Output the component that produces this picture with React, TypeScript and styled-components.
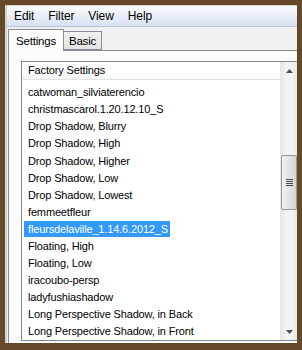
import React from "react";
import styled, { createGlobalStyle } from "styled-components";

const Global = createGlobalStyle`
  html, body { margin: 0; padding: 0; background: #5e462b; }
  body { width: 302px; height: 350px; overflow: hidden; }
`;

const Frame = styled.div`
  box-sizing: border-box;
  width: 302px;
  height: 350px;
  background: #65492b;
  padding: 5px 5px 7px 5px;
  display: flex;
`;

const Window = styled.div`
  flex: 1;
  display: flex;
  flex-direction: column;
  background: #f0f0f0;
  border-left: 2px solid #d9d2c6;
  border-top: 1px solid #d9d2c6;
  overflow: hidden;
  font-family: "Liberation Sans", Arial, sans-serif;
  color: #000;
`;

const MenuBar = styled.div`
  height: 20px;
  display: flex;
  align-items: center;
  padding-left: 7px;
  gap: 14px;
  background: linear-gradient(#fbfcfe, #e6ecf7 55%, #d9e2f3);
  border-bottom: 1px solid #b9c3d3;
  font-size: 12px;
  letter-spacing: -0.1px;
`;

const MenuItem = styled.span``;

const TabStrip = styled.div`
  height: 23px;
  display: flex;
  align-items: flex-end;
  padding-left: 1px;
`;

const Tab = styled.div<{ $active?: boolean }>`
  box-sizing: border-box;
  height: ${(p) => (p.$active ? 22 : 19)}px;
  padding: 0 ${(p) => (p.$active ? 7 : 5)}px;
  margin-bottom: ${(p) => (p.$active ? -1 : 0)}px;
  display: flex;
  align-items: center;
  font-size: 11.5px;
  letter-spacing: -0.2px;
  background: ${(p) => (p.$active ? "#fcfcfc" : "linear-gradient(#f2f2f2, #e3e3e3)")};
  border: 1px solid #898c95;
  border-bottom: ${(p) => (p.$active ? "none" : "1px solid #898c95")};
  ${(p) => (p.$active ? "" : "border-left: none;")}
  position: relative;
  z-index: ${(p) => (p.$active ? 1 : 0)};
`;

const Panel = styled.div`
  flex: 1;
  display: flex;
  background: #fcfcfc;
  border-top: 1px solid #898c95;
  border-left: 1px solid #898c95;
  margin-left: 1px;
  padding: 10px 0 2px 12px;
  min-height: 0;
`;

const ListBox = styled.div`
  flex: 1;
  display: flex;
  border: 1px solid #828790;
  border-right: none;
  background: #fff;
  min-height: 0;
`;

const ListColumn = styled.div`
  flex: 1;
  display: flex;
  flex-direction: column;
  min-width: 0;
`;

const Header = styled.div`
  height: 22px;
  display: flex;
  align-items: center;
  padding-left: 6px;
  font-size: 11px;
  letter-spacing: -0.15px;
  background: linear-gradient(#ffffff, #ffffff 50%, #f4f5f7);
  border-bottom: 1px solid #e2e3e5;
`;

const Rows = styled.div`
  padding-top: 4px;
  display: flex;
  flex-direction: column;
`;

const Row = styled.div`
  height: 17.1px;
  display: flex;
  align-items: center;
  font-size: 11px;
  letter-spacing: -0.15px;
  white-space: nowrap;
`;

const RowText = styled.span<{ $selected?: boolean }>`
  padding: 0 2px 0 4px;
  margin-left: 2px;
  line-height: 16px;
  background: ${(p) => (p.$selected ? "#3399ff" : "transparent")};
  color: ${(p) => (p.$selected ? "#fff" : "#000")};
`;

const ScrollBar = styled.div`
  width: 16px;
  display: flex;
  flex-direction: column;
  background: linear-gradient(90deg, #e6e6e6, #f3f3f3 30%, #f3f3f3 70%, #e8e8e8);
  border-left: 1px solid #e8e8e8;
`;

const Arrow = styled.div`
  height: 17px;
  display: flex;
  align-items: center;
  justify-content: center;
`;

const Track = styled.div`
  flex: 1;
  display: flex;
  flex-direction: column;
  padding-top: 76px;
`;

const Thumb = styled.div`
  box-sizing: border-box;
  height: 55px;
  border: 1px solid #979797;
  border-radius: 2px;
  background: linear-gradient(90deg, #f2f2f2, #e4e4e4 50%, #d4d4d4);
  display: flex;
  align-items: center;
  justify-content: center;
`;

const items = [
  "catwoman_silviaterencio",
  "christmascarol.1.20.12.10_S",
  "Drop Shadow, Blurry",
  "Drop Shadow, High",
  "Drop Shadow, Higher",
  "Drop Shadow, Low",
  "Drop Shadow, Lowest",
  "femmeetfleur",
  "fleursdelaville_1.14.6.2012_S",
  "Floating, High",
  "Floating, Low",
  "iracoubo-persp",
  "ladyfushiashadow",
  "Long Perspective Shadow, in Back",
  "Long Perspective Shadow, in Front",
];

export default function App() {
  return (
    <>
      <Global />
      <Frame>
        <Window>
          <MenuBar>
            <MenuItem>Edit</MenuItem>
            <MenuItem>Filter</MenuItem>
            <MenuItem>View</MenuItem>
            <MenuItem>Help</MenuItem>
          </MenuBar>
          <TabStrip>
            <Tab $active>Settings</Tab>
            <Tab>Basic</Tab>
          </TabStrip>
          <Panel>
            <ListBox>
              <ListColumn>
                <Header>Factory Settings</Header>
                <Rows>
                  {items.map((t, i) => (
                    <Row key={t}>
                      <RowText $selected={i === 8}>{t}</RowText>
                    </Row>
                  ))}
                </Rows>
              </ListColumn>
              <ScrollBar>
                <Arrow>
                  <svg width="7" height="4" viewBox="0 0 7 4">
                    <path d="M3.5 0 L7 4 L0 4 Z" fill="#4d4d4d" />
                  </svg>
                </Arrow>
                <Track>
                  <Thumb>
                    <svg width="7" height="8" viewBox="0 0 7 8">
                      <path d="M0 0.5h7M0 2.5h7M0 4.5h7M0 6.5h7" stroke="#4a4a4a" strokeWidth="1" />
                    </svg>
                  </Thumb>
                </Track>
                <Arrow>
                  <svg width="7" height="4" viewBox="0 0 7 4">
                    <path d="M0 0 L7 0 L3.5 4 Z" fill="#4d4d4d" />
                  </svg>
                </Arrow>
              </ScrollBar>
            </ListBox>
          </Panel>
        </Window>
      </Frame>
    </>
  );
}
